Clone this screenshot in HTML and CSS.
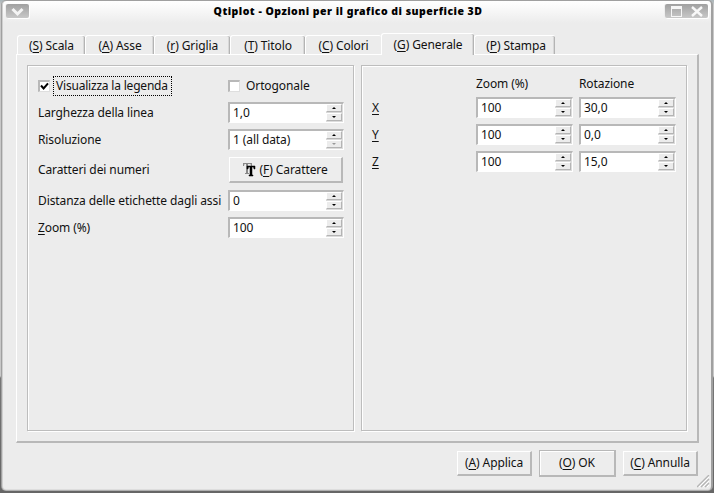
FILE: index.html
```html
<!DOCTYPE html>
<html lang="it">
<head>
<meta charset="utf-8">
<title>Qtiplot - Opzioni per il grafico di superficie 3D</title>
<link rel="stylesheet" href="styles.css">
</head>
<body>
<div class="window">
  <header class="titlebar">
    <div class="winmenu"><svg width="23" height="14" viewBox="0 0 23 14"><path d="M6.500 5l5 5 5-5" fill="none" stroke="#f4f4f4" stroke-width="3"/></svg></div>
    <h1>Qtiplot - Opzioni per il grafico di superficie 3D</h1>
    <div class="wincontrols"><svg width="43" height="14" viewBox="0 0 43 14"><path d="M6 2h11v11H6zM7 5h9v7H7z" fill="#f6f6f6" fill-rule="evenodd"/><path d="M27 3l10 9M37 3l-10 9" stroke="#f8f8f8" stroke-width="2.4"/></svg></div>
  </header>
  <nav class="tabs">
    <div class="tab t1"><span>(<u>S</u>) Scala</span></div>
    <div class="tab t2"><span>(<u>A</u>) Asse</span></div>
    <div class="tab t3"><span>(<u>r</u>) Griglia</span></div>
    <div class="tab t4"><span>(<u>T</u>) Titolo</span></div>
    <div class="tab t5"><span>(<u>C</u>) Colori</span></div>
    <div class="tab t6 active"><span>(<u>G</u>) Generale</span></div>
    <div class="tab t7"><span>(<u>P</u>) Stampa</span></div>
  </nav>
  <main class="pane">
    <section class="group general">
      <div class="check first"><i class="box"><svg width="9" height="9" viewBox="0 0 9 9"><path d="M1 3.500l2.600 3L8 1.300" fill="none" stroke="#000" stroke-width="2"/></svg></i><span class="focus">Visualizza la legenda</span></div>
      <div class="check"><i class="box"></i><span>Ortogonale</span></div>
      <label>Larghezza della linea</label>
      <div class="spin"><span>1,0</span><i class="arrows"><b class="up"></b><b class="down"></b></i></div>
      <label>Risoluzione</label>
      <div class="spin"><span>1 (all data)</span><i class="arrows"><b class="up"></b><b class="down off"></b></i></div>
      <label>Caratteri dei numeri</label>
      <button class="btn font"><svg width="13" height="14" viewBox="0 0 13 14"><path d="M0 0h9v3H8L7.500 1H5v9h1v1H2v-1h1V1H1.500L1 3H0z" fill="#888"/><path d="M4 3h8v3h-1l-.5-2H9v8h1v1H6v-1h1V4H5.500L5 6H4z" fill="#000" stroke="#000" stroke-width=".5"/></svg><span>(<u>F</u>) Carattere</span></button>
      <label>Distanza delle etichette dagli assi</label>
      <div class="spin"><span>0</span><i class="arrows"><b class="up"></b><b class="down"></b></i></div>
      <label><u>Z</u>oom (%)</label>
      <div class="spin"><span>100</span><i class="arrows"><b class="up"></b><b class="down"></b></i></div>
    </section>
    <section class="group axes">
      <span></span><label class="head">Zoom (%)</label><label class="head">Rotazione</label>
      <label><u>X</u></label>
      <div class="spin"><span>100</span><i class="arrows"><b class="up"></b><b class="down"></b></i></div>
      <div class="spin"><span>30,0</span><i class="arrows"><b class="up"></b><b class="down"></b></i></div>
      <label><u>Y</u></label>
      <div class="spin"><span>100</span><i class="arrows"><b class="up"></b><b class="down"></b></i></div>
      <div class="spin"><span>0,0</span><i class="arrows"><b class="up"></b><b class="down"></b></i></div>
      <label><u>Z</u></label>
      <div class="spin"><span>100</span><i class="arrows"><b class="up"></b><b class="down"></b></i></div>
      <div class="spin"><span>15,0</span><i class="arrows"><b class="up"></b><b class="down"></b></i></div>
    </section>
  </main>
  <footer class="actions">
    <button class="btn">(<u>A</u>) Applica</button>
    <button class="btn default">(<u>O</u>) OK</button>
    <button class="btn">(<u>C</u>) Annulla</button>
  </footer>
  <svg class="grip" width="13" height="13" viewBox="0 0 13 13"><path d="M0 12L12 0M4 12l8-8M8 12l4-4" stroke="#b4b4b4" stroke-width="1.300"/><path d="M2 12L12 2M6 12l6-6M10 12l2-2" stroke="#fff"/></svg>
</div>
</body>
</html>
```

FILE: styles.css
```css
* { box-sizing: border-box; }
body {
  margin: 0;
  width: 714px;
  height: 493px;
  overflow: hidden;
  background: linear-gradient(#a8b4b8 0, #c8c8c8 5px, #c8c8c8 376px, #777 378px, #666 100%);
  font: 12px/16px "Noto Sans", sans-serif;
  letter-spacing: -0.1px;
  color: #111;
}
u { text-decoration: underline; text-decoration-thickness: 1px; text-underline-offset: 2px; }
.window {
  position: relative;
  width: 712px;
  height: 491px;
  margin-left: 1px;
  border: 1px solid #a0a0a0;
  border-right: 2px solid #a0a0a0;
  border-bottom-color: #b0b0b0;
  border-radius: 5px;
  background: linear-gradient(#fff 0, #fbfbfb 5px, #ececec 22px);
  box-shadow: inset 1px 0 #cfcfcf, inset 0 -1px #ddd;
}
.titlebar { display: flex; height: 24px; padding: 3px 4px 0 4px; align-items: flex-start; }
.winmenu, .wincontrols {
  height: 14px;
  border-radius: 2px;
  background: linear-gradient(#a0a0a0, #c8c8c8);
  box-shadow: 1px 1px #fff, -1px 0 #eee;
}
.winmenu svg, .wincontrols svg { display: block; }
.winmenu { width: 23px; }
.wincontrols { width: 43px; margin-right: -1px; }
h1 {
  flex: 1;
  margin: 0;
  padding-left: 2px;
  text-align: center;
  font: 900 10.5px/14px "Noto Sans", sans-serif;
  letter-spacing: 0.48px;
  color: #000;
}
.tabs { display: flex; height: 29px; padding-left: 15px; align-items: flex-end; }
.tab {
  height: 19px;
  border: solid #fff;
  border-width: 1px 0 0 1px;
  border-radius: 3px 2px 0 0;
  box-shadow: inset -1px 0 #b4b4b4, inset -2px 0 #d8d8d8;
  text-align: center;
  line-height: 19px;
  white-space: nowrap;
}
.t1 { width: 68px; }
.t2 { width: 69px; }
.t3 { width: 76px; }
.t4 { width: 75px; }
.t5 { width: 76px; box-shadow: none; }
.t6 { width: 93px; }
.t7 { width: 81px; padding-left: 2px; }
.active { position: relative; height: 22px; margin-bottom: -1px; background: #ececec; line-height: 21px; z-index: 1; }
.pane {
  display: flex;
  gap: 7px;
  width: 683px;
  height: 389px;
  margin-left: 14px;
  padding: 10px;
  border: solid;
  border-width: 1px 2px 2px 1px;
  border-color: #fff #b8b8b8 #b8b8b8 #fff;
}
.group {
  display: grid;
  align-content: start;
  gap: 6px 0;
  height: 366px;
  padding: 9px 10px;
  border: 1px solid #bdbdbd;
  box-shadow: 1px 1px #fff, inset 1px 1px #fff;
  align-items: center;
}
.general { width: 327px; grid-template-columns: 190px 116px; grid-template-rows: 21px 21px 21px 28px 21px 21px; }
.axes { width: 326px; grid-template-columns: 104px 97px 103px; grid-template-rows: 16px repeat(3, 21px); }
.axes .spin + .spin, .axes label:nth-child(3) { margin-left: 6px; }
label { white-space: nowrap; }
.head { padding-top: 2px; }
.check { display: flex; align-items: center; height: 21px; white-space: nowrap; }
.box {
  width: 12px;
  height: 12px;
  margin-right: 6px;
  background: #fff;
  border: solid;
  border-width: 2px 1px 1px 2px;
  border-color: #b8b8b8 #dedede #dedede #b8b8b8;
}
.box svg { display: block; }
.first .box { margin-right: 3px; }
.focus { height: 20px; width: 119px; padding: 0 0 0 2px; border: 1px dotted #000; line-height: 18px; letter-spacing: -0.2px; }
.spin {
  display: flex;
  justify-content: space-between;
  height: 21px;
  padding-left: 3px;
  background: #fff;
  border: solid;
  border-width: 2px 1px 1px 2px;
  border-color: #b8b8b8 #fff #fff #b8b8b8;
  line-height: 18px;
}
.axes .spin { width: 97px; }
.arrows { display: flex; flex-direction: column; width: 17px; height: 18px; gap: 1px; background: #d8d8d8; border: solid #dcdcdc; border-width: 0 1px 1px 0; }
.arrows b {
  display: flex;
  flex: 1;
  align-items: center;
  justify-content: center;
  background: #ececec;
  border: 1px solid;
  border-color: #fff #b4b4b4 #b4b4b4 #fff;
}
.arrows b::after { content: ""; border: solid transparent; border-width: 0 2px 2px; border-bottom-color: #000; }
.arrows .down::after { border-width: 2px 2px 0; border-color: #000 transparent; }
.arrows .off::after { border-top-color: #999; }
.btn {
  height: 26px;
  padding: 0;
  background: #ededed;
  border: solid;
  border-width: 1px 2px 2px 1px;
  border-color: #fff #b8b8b8 #b8b8b8 #fff;
  color: #111;
  font: inherit;
  letter-spacing: inherit;
  white-space: nowrap;
}
.font { display: flex; align-items: center; justify-content: center; gap: 3px; width: 114px; margin-left: 1px; }
.actions { display: flex; align-items: center; justify-content: flex-end; gap: 7px; height: 27px; margin: 7px 13px 0 0; }
.actions .btn { width: 75px; height: 25px; }
.actions .default { width: 77px; height: 27px; border-color: #b8b8b8; box-shadow: inset 1px 1px #fff; }
.grip { position: absolute; right: 1px; bottom: 2px; }
```
